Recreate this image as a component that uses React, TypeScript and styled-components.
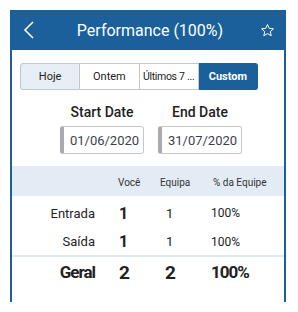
import React from "react";
import styled, { createGlobalStyle } from "styled-components";

const BLUE = "#1b5f9b";

const Global = createGlobalStyle`
  html, body { margin: 0; padding: 0; background: #fff; }
  body { font-family: Roboto, "Noto Sans", Arial, sans-serif; }
  * { box-sizing: border-box; }
`;

const Page = styled.div`
  padding: 10px 12px 10px 10px;
`;

const Frame = styled.div`
  width: 276px;
  height: 292px;
  border-left: 2px solid ${BLUE};
  border-right: 2px solid ${BLUE};
  display: flex;
  flex-direction: column;
`;

const Header = styled.div`
  height: 40px;
  margin: 0 -2px;
  background: ${BLUE};
  color: #fff;
  display: flex;
  align-items: center;
  justify-content: space-between;
  padding: 0 8px 0 8px;
`;

const Title = styled.div`
  font-size: 16px;
  font-weight: 400;
  flex: 1;
  text-align: center;
  padding-left: 4px;
`;

const IconBox = styled.div`
  width: 22px;
  height: 22px;
  display: flex;
  align-items: center;
  justify-content: center;
`;

const Segments = styled.div`
  margin: 13px 0 0 8px;
  width: 238px;
  height: 27px;
  display: flex;
`;

const Seg = styled.div<{ $active?: boolean; $selected?: boolean; $pos: "first" | "mid" | "last" }>`
  flex: 1;
  min-width: 0;
  display: flex;
  align-items: center;
  justify-content: center;
  font-size: 11px;
  padding: 0 1px;
  white-space: nowrap;
  color: ${(p) => (p.$selected ? "#fff" : "#222")};
  font-weight: ${(p) => (p.$selected ? 700 : 400)};
  background: ${(p) => (p.$selected ? BLUE : p.$active ? "#e8eef5" : "#fff")};
  border: 1px solid ${(p) => (p.$selected ? BLUE : "#c4c7cc")};
  border-left-width: ${(p) => (p.$pos === "first" ? 1 : 0)}px;
  border-radius: ${(p) =>
    p.$pos === "first" ? "3px 0 0 3px" : p.$pos === "last" ? "0 3px 3px 0" : "0"};
`;

const SegText = styled.span<{ $tight?: boolean }>`
  letter-spacing: ${(p) => (p.$tight ? "-0.3px" : "0")};
  font-size: ${(p) => (p.$tight ? "10.5px" : "inherit")};
`;

const Dates = styled.div`
  display: flex;
  justify-content: center;
  gap: 14px;
  padding-left: 6px;
  margin-top: 14px;
`;

const DateCol = styled.div`
  display: flex;
  flex-direction: column;
  align-items: center;
  width: 84px;
`;

const DateLabel = styled.div`
  font-size: 14px;
  font-weight: 500;
  color: #222;
  line-height: 16px;
  margin-bottom: 6px;
`;

const DateInput = styled.div`
  width: 84px;
  height: 28px;
  border: 1px solid #c4c7cc;
  border-left: 4px solid #a9abb0;
  border-radius: 3px;
  display: flex;
  align-items: center;
  justify-content: center;
  font-size: 13px;
  color: #3c3f4a;
  padding-left: 2px;
`;

const Table = styled.div`
  margin-top: 12px;
  display: flex;
  flex-direction: column;
`;

const Row = styled.div<{ $head?: boolean; $h: number }>`
  display: grid;
  grid-template-columns: 106px 42px 51px 1fr;
  align-items: center;
  height: ${(p) => p.$h}px;
  background: ${(p) => (p.$head ? "#e3ebf4" : "transparent")};
`;

const Divider = styled.div`
  height: 2px;
  background: #e1e9f2;
`;

const HeadCell = styled.div<{ $pad?: number }>`
  font-size: 10px;
  color: #333;
  padding-left: ${(p) => p.$pad ?? 0}px;
  padding-top: 2px;
`;

const Label = styled.div<{ $big?: boolean }>`
  text-align: right;
  padding-right: 23px;
  font-size: ${(p) => (p.$big ? 17 : 13)}px;
  font-weight: ${(p) => (p.$big ? 700 : 400)};
  letter-spacing: ${(p) => (p.$big ? "-1px" : "0")};
  color: #222;
`;

const Val = styled.div<{ $size: number; $bold?: boolean; $pad?: number; $tight?: boolean }>`
  font-size: ${(p) => p.$size}px;
  font-weight: ${(p) => (p.$bold ? 700 : 400)};
  letter-spacing: ${(p) => (p.$tight ? "-1px" : "0")};
  color: #222;
  padding-left: ${(p) => p.$pad ?? 0}px;
`;

const Spacer = styled.div`
  height: 2px;
`;

const Chevron = () => (
  <svg width="12" height="18" viewBox="0 0 12 18">
    <path d="M10 1 L2 9 L10 17" fill="none" stroke="#fff" strokeWidth="1.6" />
  </svg>
);

const Star = () => (
  <svg width="15" height="15" viewBox="0 0 24 24">
    <path
      d="M12 2.5 L14.8 8.6 L21.5 9.3 L16.5 13.8 L17.9 20.4 L12 17 L6.1 20.4 L7.5 13.8 L2.5 9.3 L9.2 8.6 Z"
      fill="none"
      stroke="#fff"
      strokeWidth="1.6"
      strokeLinejoin="round"
    />
  </svg>
);

export default function App() {
  return (
    <>
      <Global />
      <Page>
        <Frame>
          <Header>
            <IconBox>
              <Chevron />
            </IconBox>
            <Title>Performance (100%)</Title>
            <IconBox>
              <Star />
            </IconBox>
          </Header>
          <Segments>
            <Seg $pos="first" $active>
              <SegText>Hoje</SegText>
            </Seg>
            <Seg $pos="mid">
              <SegText>Ontem</SegText>
            </Seg>
            <Seg $pos="mid">
              <SegText $tight>Últimos 7 ...</SegText>
            </Seg>
            <Seg $pos="last" $selected>
              <SegText>Custom</SegText>
            </Seg>
          </Segments>
          <Dates>
            <DateCol>
              <DateLabel>Start Date</DateLabel>
              <DateInput>01/06/2020</DateInput>
            </DateCol>
            <DateCol>
              <DateLabel>End Date</DateLabel>
              <DateInput>31/07/2020</DateInput>
            </DateCol>
          </Dates>
          <Table>
            <Row $head $h={30}>
              <div />
              <HeadCell>Você</HeadCell>
              <HeadCell>Equipa</HeadCell>
              <HeadCell $pad={2}>% da Equipe</HeadCell>
            </Row>
            <Spacer />
            <Row $h={30}>
              <Label>Entrada</Label>
              <Val $size={16} $bold $pad={1}>1</Val>
              <Val $size={13} $pad={6}>1</Val>
              <Val $size={12}>100%</Val>
            </Row>
            <Row $h={27}>
              <Label>Saída</Label>
              <Val $size={16} $bold $pad={1}>1</Val>
              <Val $size={13} $pad={6}>1</Val>
              <Val $size={12}>100%</Val>
            </Row>
            <Divider />
            <Row $h={30}>
              <Label $big>Geral</Label>
              <Val $size={19} $bold $pad={1}>2</Val>
              <Val $size={19} $bold $pad={5}>2</Val>
              <Val $size={17} $bold $tight>100%</Val>
            </Row>
          </Table>
        </Frame>
      </Page>
    </>
  );
}
